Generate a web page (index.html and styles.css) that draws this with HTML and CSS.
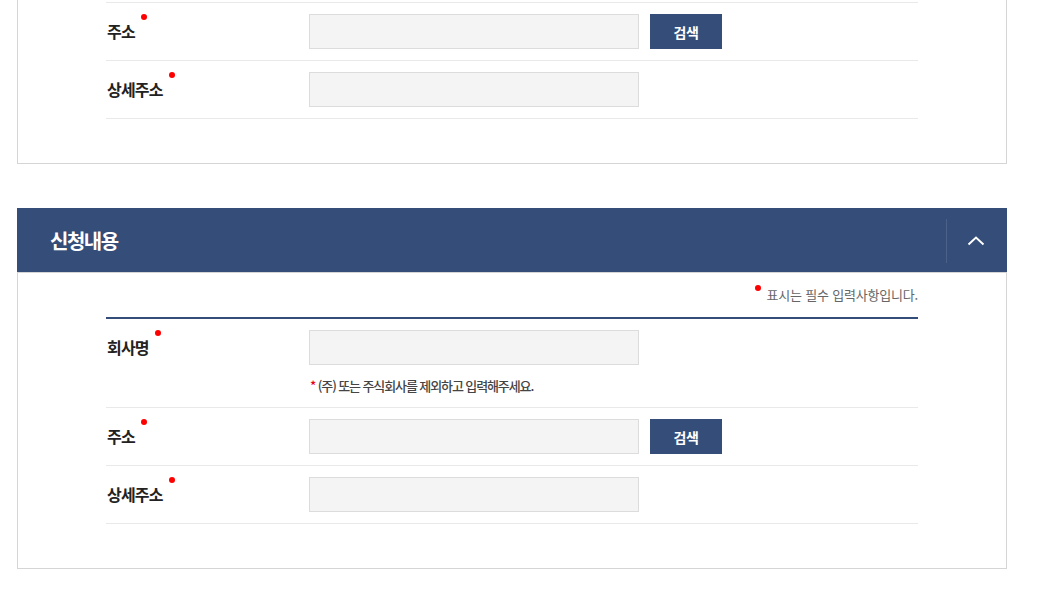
FILE: index.html
```html
<!DOCTYPE html>
<html lang="ko">
<head>
    <meta charset="UTF-8">
    <meta name="viewport" content="width=device-width, initial-scale=1.0">
    <title>신청서 작성</title>
    <link rel="stylesheet" href="styles.css">
</head>
<body>
    <div class="page">
        <!-- previous section (scrolled, top cut off) -->
        <div class="panel panel-cut">
            <div class="form form-plain">
                <div class="row">
                    <label class="row-label" for="addr-1">주소<span class="req"></span></label>
                    <div class="row-field">
                        <div class="field-line">
                            <input type="text" id="addr-1" class="text-input">
                            <button type="button" class="btn-search">검색</button>
                        </div>
                    </div>
                </div>
                <div class="row">
                    <label class="row-label" for="addr-detail-1">상세주소<span class="req"></span></label>
                    <div class="row-field">
                        <input type="text" id="addr-detail-1" class="text-input">
                    </div>
                </div>
            </div>
        </div>

        <div class="section">
            <div class="section-head">
                <h2 class="section-title">신청내용</h2>
                <button type="button" class="btn-toggle" aria-label="접기">
                    <svg width="18" height="10" viewBox="0 0 18 10">
                        <polyline points="1.5,8.5 9,1.5 16.5,8.5" fill="none" stroke="#fff" stroke-width="2"/>
                    </svg>
                </button>
            </div>
            <div class="section-body">
                <p class="req-note"><span class="req"></span>표시는 필수 입력사항입니다.</p>
                <div class="form form-main">
                    <div class="row">
                        <label class="row-label" for="company">회사명<span class="req"></span></label>
                        <div class="row-field">
                            <input type="text" id="company" class="text-input">
                            <p class="help"><span class="star">*</span> (주) 또는 주식회사를 제외하고 입력해주세요.</p>
                        </div>
                    </div>
                    <div class="row">
                        <label class="row-label" for="addr-2">주소<span class="req"></span></label>
                        <div class="row-field">
                            <div class="field-line">
                                <input type="text" id="addr-2" class="text-input">
                                <button type="button" class="btn-search">검색</button>
                            </div>
                        </div>
                    </div>
                    <div class="row">
                        <label class="row-label" for="addr-detail-2">상세주소<span class="req"></span></label>
                        <div class="row-field">
                            <input type="text" id="addr-detail-2" class="text-input">
                        </div>
                    </div>
                </div>
            </div>
        </div>
    </div>
</body>
</html>
```

FILE: styles.css
```css
body {
    font-family: "Noto Sans CJK KR", "Noto Sans", sans-serif;
    background-color: #fff;
    color: #222;
    margin: 0;
    padding: 0;
}
.page {
    padding: 0 0 0 17px;
    overflow: hidden;
}
.panel {
    width: 990px;
    box-sizing: border-box;
    border: 1px solid #d5d5d5;
    padding-bottom: 44px;
}
.panel-cut {
    margin-top: -40px;
    padding-top: 41px;
}
.form {
    width: 812px;
    margin: 0 auto;
}
.form-plain {
    border-top: 1px solid #e9e9e9;
}
.form-main {
    border-top: 2px solid #344d79;
}
.row {
    display: flex;
    padding: 11px 0;
    border-bottom: 1px solid #e9e9e9;
}
.row-label {
    width: 202px;
    padding-left: 1px;
    flex-shrink: 0;
    font-size: 16px;
    font-weight: 700;
    letter-spacing: -0.8px;
    line-height: 35px;
    color: #222;
}
.req {
    display: inline-block;
    vertical-align: top;
    width: 6px;
    height: 6px;
    margin-left: 6px;
    border-radius: 50%;
    background: #f00;
}
.row-field {
    display: flex;
    flex-direction: column;
}
.field-line {
    display: flex;
    gap: 11px;
}
.text-input {
    width: 330px;
    height: 35px;
    box-sizing: border-box;
    border: 1px solid #dcdcdc;
    background: #f4f4f4;
    margin: 0;
    padding: 0 10px;
}
.btn-search {
    width: 72px;
    height: 35px;
    border: none;
    background: #344d79;
    color: #fff;
    font-family: inherit;
    font-size: 14px;
    font-weight: 700;
    letter-spacing: -0.5px;
    cursor: pointer;
}
.help {
    margin: 11px 0 0 1px;
    font-size: 13px;
    line-height: 20px;
    font-weight: 500;
    letter-spacing: -1.1px;
    color: #444;
}
.help .star {
    color: #e60012;
}
.section {
    width: 990px;
    margin-top: 44px;
}
.section-head {
    display: flex;
    align-items: center;
    justify-content: space-between;
    height: 64px;
    padding-left: 33px;
    background: #344d79;
}
.section-title {
    margin: 0;
    font-size: 20px;
    font-weight: 700;
    letter-spacing: -1.5px;
    color: #fff;
}
.btn-toggle {
    width: 61px;
    height: 44px;
    margin-top: 2px;
    border: none;
    border-left: 1px solid #4b6189;
    background: transparent;
    padding: 0 3px 0 0;
    cursor: pointer;
    display: flex;
    align-items: center;
    justify-content: center;
}
.section-body {
    border: 1px solid #d5d5d5;
    padding: 12px 0 44px;
}
.req-note {
    width: 812px;
    margin: 0 auto 12px;
    text-align: right;
    font-size: 13px;
    line-height: 20px;
    letter-spacing: -0.2px;
    color: #666;
}
.req-note .req {
    margin: 0 6px 0 0;
}
```
